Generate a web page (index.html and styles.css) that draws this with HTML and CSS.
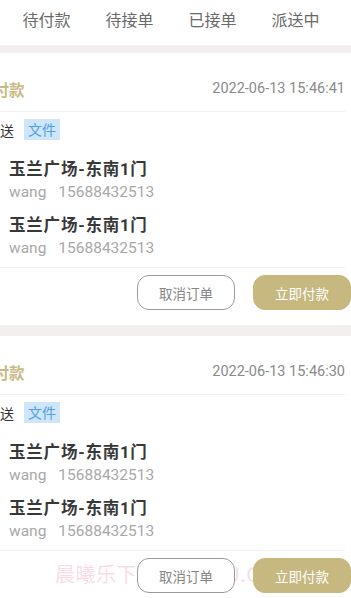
FILE: index.html
```html
<!DOCTYPE html>
<html lang="zh">
<head>
<meta charset="utf-8">
<link rel="stylesheet" href="styles.css">
</head>
<body>
<nav class="tabs">
  <div class="tab">待付款</div>
  <div class="tab">待接单</div>
  <div class="tab">已接单</div>
  <div class="tab">派送中</div>
</nav>

<main class="list">
  <section class="card">
    <header class="card-head">
      <span class="status">待付款</span>
      <span class="time">2022-06-13 15:46:41</span>
    </header>
    <div class="type-row">
      <span class="type">配送</span>
      <span class="tag">文件</span>
    </div>
    <div class="addrs">
      <div class="addr">
        <div class="place">玉兰广场-东南1门</div>
        <div class="contact"><span>wang</span><span class="phone">15688432513</span></div>
      </div>
      <div class="addr">
        <div class="place">玉兰广场-东南1门</div>
        <div class="contact"><span>wang</span><span class="phone">15688432513</span></div>
      </div>
    </div>
    <div class="actions">
      <button class="btn btn-cancel">取消订单</button>
      <button class="btn btn-pay">立即付款</button>
    </div>
  </section>

  <section class="card">
    <header class="card-head">
      <span class="status">待付款</span>
      <span class="time">2022-06-13 15:46:30</span>
    </header>
    <div class="type-row">
      <span class="type">配送</span>
      <span class="tag">文件</span>
    </div>
    <div class="addrs">
      <div class="addr">
        <div class="place">玉兰广场-东南1门</div>
        <div class="contact"><span>wang</span><span class="phone">15688432513</span></div>
      </div>
      <div class="addr">
        <div class="place">玉兰广场-东南1门</div>
        <div class="contact"><span>wang</span><span class="phone">15688432513</span></div>
      </div>
    </div>
    <div class="actions">
      <button class="btn btn-cancel">取消订单</button>
      <button class="btn btn-pay">立即付款</button>
    </div>
  </section>
</main>

<div class="watermark">晨曦乐下载 CXLEDU.COM</div>
</body>
</html>
```

FILE: styles.css
```css
html, body {
  margin: 0;
  padding: 0;
  overflow-x: hidden;
}
body {
  background: #f2efee;
  font-family: Roboto, "Noto Sans CJK SC", sans-serif;
  color: #333;
  position: relative;
  min-height: 598px;
}

.tabs {
  display: flex;
  height: 45px;
  background: #fff;
  padding-left: 5px;
  margin-bottom: 8px;
  overflow: hidden;
  white-space: nowrap;
}
.tab {
  flex: 0 0 83px;
  text-align: center;
  padding-top: 8px;
  line-height: 22px;
  font-size: 16px;
  color: #6a6a6a;
  font-family: "Noto Sans CJK SC", sans-serif;
}

.list {
  margin-left: -37px;
  width: 388px;
  display: flex;
  flex-direction: column;
  gap: 11px;
}

.card {
  background: #fff;
  padding: 0 6px 15px 15px;
}

.card-head {
  display: flex;
  justify-content: space-between;
  align-items: center;
  padding: 26px 0 12px;
  line-height: 20px;
  border-bottom: 1px solid #efefef;
}
.status {
  font-family: "Noto Sans CJK SC", sans-serif;
  font-size: 15.5px;
  font-weight: 700;
  color: #c8b985;
}
.time {
  font-size: 14.5px;
  color: #8a8a8a;
}

.type-row {
  display: flex;
  align-items: center;
  padding-top: 7px;
  padding-left: 8px;
}
.type {
  font-family: "Noto Sans CJK SC", sans-serif;
  font-size: 14px;
  color: #333;
  margin-right: 10px;
}
.tag {
  display: inline-block;
  height: 21px;
  line-height: 21px;
  padding: 0 4px;
  font-family: "Noto Sans CJK SC", sans-serif;
  font-size: 14px;
  color: #4da0e6;
  background: #cfe5f9;
}

.addrs {
  display: flex;
  flex-direction: column;
  gap: 12px;
  padding: 19px 0 8px 31px;
  border-bottom: 1px solid #efefef;
}
.place {
  line-height: 22px;
  font-size: 16.5px;
  font-weight: 700;
  color: #383838;
  letter-spacing: 0.8px;
}
.contact {
  line-height: 22px;
  font-size: 15.5px;
  color: #a8a8a8;
}
.phone {
  margin-left: 12px;
}

.actions {
  display: flex;
  justify-content: flex-end;
  gap: 18px;
  margin-top: 7px;
  margin-right: -6px;
}
.btn {
  width: 98px;
  height: 35px;
  border-radius: 12px;
  font-family: "Noto Sans CJK SC", sans-serif;
  font-size: 13.5px;
  padding: 0;
  position: relative;
  z-index: 1;
}
.btn-cancel {
  background: #fff;
  border: 1px solid #9a9a9a;
  color: #858585;
}
.btn-pay {
  background: #c6b87e;
  border: 1px solid #c6b87e;
  color: #fff;
}

.watermark {
  position: absolute;
  left: 55px;
  top: 563px;
  font-family: "Noto Sans CJK SC", sans-serif;
  font-size: 20px;
  line-height: 22px;
  color: rgba(240, 150, 190, 0.35);
  letter-spacing: 0.5px;
  white-space: nowrap;
  pointer-events: none;
  z-index: 0;
}
```
